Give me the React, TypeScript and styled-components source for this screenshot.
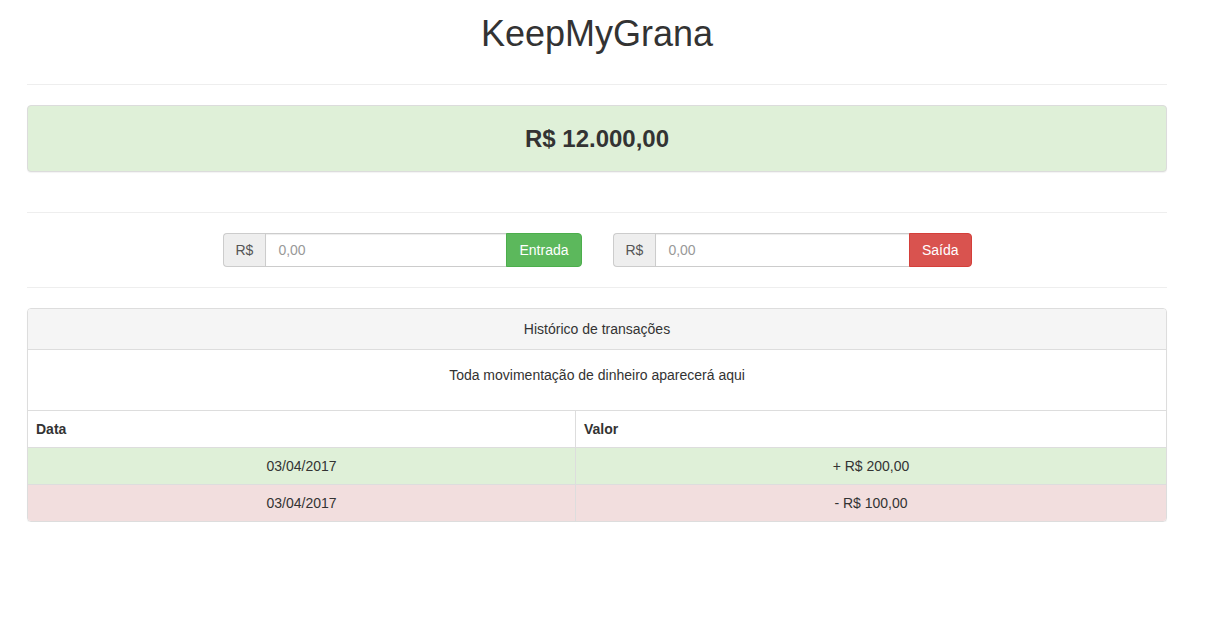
import React from "react";
import styled, { createGlobalStyle } from "styled-components";

const Global = createGlobalStyle`
  * { box-sizing: border-box; }
  html, body { margin: 0; padding: 0; background: #fff; }
  body {
    font-family: "Liberation Sans", Arial, Helvetica, sans-serif;
    font-size: 14px;
    line-height: 1.42857143;
    color: #333;
  }
`;

const Page = styled.div`
  width: 1140px;
  margin-left: 27px;
  display: flex;
  flex-direction: column;
`;

const Title = styled.h1`
  margin: 14px 0 0;
  font-size: 36px;
  font-weight: 500;
  line-height: 40px;
  height: 40px;
  text-align: center;
  color: #333;
`;

const Divider = styled.hr<{ $top: number }>`
  margin: ${(p) => p.$top}px 0 0;
  border: 0;
  border-top: 1px solid #eee;
  height: 0;
`;

const Balance = styled.div`
  margin-top: 20px;
  background: #dff0d8;
  border: 1px solid #dcdcdc;
  border-radius: 4px;
  box-shadow: 0 1px 1px rgba(0, 0, 0, 0.05);
  padding: 20px 15px 19px;
  text-align: center;
  font-size: 24px;
  font-weight: 700;
  line-height: 26px;
  color: #333;
`;

const FormRow = styled.div`
  margin-top: 20px;
  display: flex;
  justify-content: center;
  gap: 31px;
`;

const InputGroup = styled.div`
  width: 359px;
  height: 34px;
  display: flex;
`;

const Addon = styled.span`
  padding: 6px 12px;
  font-size: 14px;
  line-height: 20px;
  color: #555;
  background: #eee;
  border: 1px solid #ccc;
  border-right: 0;
  border-radius: 4px 0 0 4px;
`;

const Input = styled.input`
  flex: 1;
  min-width: 0;
  height: 34px;
  padding: 6px 12px;
  font-family: inherit;
  font-size: 14px;
  line-height: 20px;
  color: #555;
  background: #fff;
  border: 1px solid #ccc;
  border-radius: 0;
  box-shadow: inset 0 1px 1px rgba(0, 0, 0, 0.075);
  outline: none;
  &::placeholder { color: #999; }
`;

const Button = styled.button<{ $variant: "success" | "danger" }>`
  margin-left: -1px;
  padding: 6px 12px;
  font-family: inherit;
  font-size: 14px;
  line-height: 20px;
  color: #fff;
  background: ${(p) => (p.$variant === "success" ? "#5cb85c" : "#d9534f")};
  border: 1px solid ${(p) => (p.$variant === "success" ? "#4cae4c" : "#d43f3a")};
  border-radius: 0 4px 4px 0;
  cursor: pointer;
`;

const Panel = styled.div`
  margin-top: 20px;
  border: 1px solid #ddd;
  border-radius: 4px;
  box-shadow: 0 1px 1px rgba(0, 0, 0, 0.05);
  overflow: hidden;
`;

const PanelHeading = styled.div`
  padding: 10px 15px;
  background: #f5f5f5;
  border-bottom: 1px solid #ddd;
  text-align: center;
  line-height: 20px;
`;

const PanelBody = styled.div`
  padding: 15px 15px 25px;
  text-align: center;
  line-height: 20px;
`;

const Table = styled.div`
  display: grid;
  grid-template-columns: 547px 1fr;
  border-top: 1px solid #ddd;
`;

const Cell = styled.div<{ $tone?: "success" | "danger"; $head?: boolean; $last?: boolean; $right?: boolean }>`
  padding: 8px;
  line-height: 20px;
  font-weight: ${(p) => (p.$head ? 700 : 400)};
  text-align: ${(p) => (p.$head ? "left" : "center")};
  background: ${(p) => (p.$tone === "success" ? "#dff0d8" : p.$tone === "danger" ? "#f2dede" : "#fff")};
  border-bottom: ${(p) => (p.$last ? "0" : "1px solid #ddd")};
  border-left: ${(p) => (p.$right ? "1px solid #ddd" : "0")};
`;

const rows: { date: string; value: string; tone: "success" | "danger" }[] = [
  { date: "03/04/2017", value: "+ R$ 200,00", tone: "success" },
  { date: "03/04/2017", value: "- R$ 100,00", tone: "danger" },
];

export default function App() {
  return (
    <>
      <Global />
      <Page>
        <Title>KeepMyGrana</Title>
        <Divider $top={30} />
        <Balance>R$ 12.000,00</Balance>
        <Divider $top={40} />
        <FormRow>
          <InputGroup>
            <Addon>R$</Addon>
            <Input placeholder="0,00" />
            <Button $variant="success">Entrada</Button>
          </InputGroup>
          <InputGroup>
            <Addon>R$</Addon>
            <Input placeholder="0,00" />
            <Button $variant="danger">Saída</Button>
          </InputGroup>
        </FormRow>
        <Divider $top={20} />
        <Panel>
          <PanelHeading>Histórico de transações</PanelHeading>
          <PanelBody>Toda movimentação de dinheiro aparecerá aqui</PanelBody>
          <Table>
            <Cell $head>Data</Cell>
            <Cell $head $right>Valor</Cell>
            {rows.map((r, i) => (
              <React.Fragment key={i}>
                <Cell $tone={r.tone} $last={i === rows.length - 1}>{r.date}</Cell>
                <Cell $tone={r.tone} $right $last={i === rows.length - 1}>{r.value}</Cell>
              </React.Fragment>
            ))}
          </Table>
        </Panel>
      </Page>
    </>
  );
}
